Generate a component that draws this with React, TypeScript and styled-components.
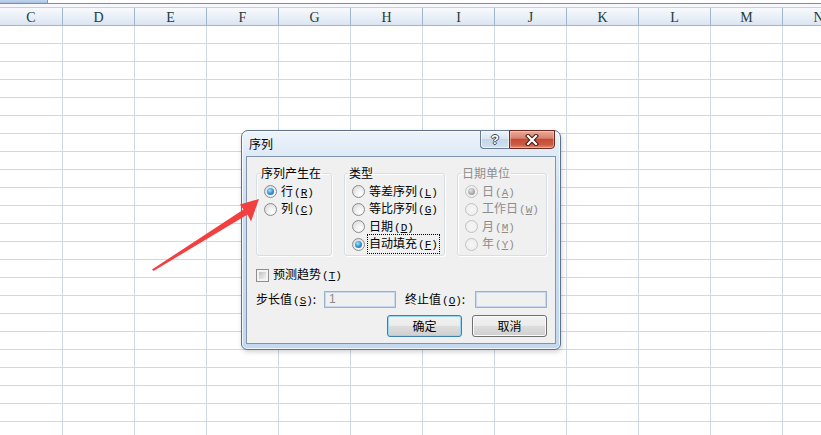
import React from 'react';
import styled, { createGlobalStyle } from 'styled-components';

const Global = createGlobalStyle`
  html, body { margin: 0; padding: 0; background: #ffffff; }
  body { overflow: hidden; }
`;

const Page = styled.div`
  position: relative;
  width: 821px;
  height: 435px;
  overflow: hidden;
  background: #ffffff;
  font-family: "Noto Sans CJK SC", "Liberation Sans", sans-serif;
`;

const TopStrip = styled.div`
  height: 3px;
  background: #ffffff;
  border-bottom: 1px solid #7290b4;
  display: flex;
`;

const SheetTab = styled.div`
  width: 48px;
  height: 3px;
  background: linear-gradient(180deg, #c3d6ee, #a8c2e4);
  border-right: 1px solid #7f9dc2;
  box-sizing: border-box;
`;

const HeaderBand = styled.div`
  padding-top: 3px;
  background: linear-gradient(180deg, #f7f9fc, #eef3f9);
`;

const HeaderRow = styled.div`
  display: flex;
  height: 19px;
  box-sizing: border-box;
  border-top: 1px solid #c3d0e0;
  border-bottom: 1px solid #9eb6ce;
  background: linear-gradient(180deg, #f7f9fd 0%, #e9eff7 55%, #dbe5f1 100%);
`;

const HeadCell = styled.div<{ $first?: boolean }>`
  flex: none;
  width: ${p => (p.$first ? 63 : 72)}px;
  box-sizing: border-box;
  border-right: 1px solid #9eb6ce;
  display: flex;
  justify-content: center;
  align-items: center;
  padding-top: 2px;
  font-family: "Liberation Serif", serif;
  font-size: 14px;
  color: #1f3b3a;
  line-height: 14px;
`;

const GridRow = styled.div`
  display: flex;
  height: 18px;
  box-sizing: border-box;
  border-bottom: 1px solid #d0d7e5;
`;

const GridCell = styled.div<{ $first?: boolean }>`
  flex: none;
  width: ${p => (p.$first ? 63 : 72)}px;
  box-sizing: border-box;
  border-right: 1px solid #d0d7e5;
`;

/* ---------- dialog ---------- */

const Dialog = styled.div`
  position: absolute;
  left: 241px;
  top: 130px;
  width: 320px;
  height: 220px;
  box-sizing: border-box;
  border: 1px solid #5d7189;
  border-radius: 7px 7px 6px 6px;
  background: linear-gradient(180deg, #edf4fb 0%, #dde9f6 12%, #cadcf1 40%, #c3d9f0 100%);
  box-shadow: inset 0 0 0 1px rgba(255, 255, 255, 0.75), 1px 2px 5px rgba(0, 0, 0, 0.18);
  padding: 0 4px 5px 4px;
  display: flex;
  flex-direction: column;
  color: #000;
  font-size: 12px;
  line-height: 14px;
`;

const TitleBar = styled.div`
  height: 25px;
  flex: none;
  display: flex;
  justify-content: space-between;
  align-items: flex-start;
`;

const TitleText = styled.div`
  padding: 6px 0 0 3px;
  font-size: 12px;
  line-height: 14px;
`;

const CaptionButtons = styled.div`
  display: flex;
  margin-top: -1px;
  margin-right: 1px;
`;

const HelpButton = styled.div`
  width: 29px;
  height: 19px;
  box-sizing: border-box;
  border: 1px solid #6a7c93;
  border-right: none;
  border-radius: 0 0 0 4px;
  background: linear-gradient(180deg, #eef4fb 0%, #dbe6f3 45%, #c5d6ea 50%, #d2e1f1 100%);
  box-shadow: inset 0 0 0 1px rgba(255, 255, 255, 0.6);
  display: flex;
  align-items: center;
  justify-content: center;
  font-family: "Liberation Sans", sans-serif;
  font-weight: bold;
  font-size: 13px;
  color: #ffffff;
  text-shadow: 1px 0 #34465d, -1px 0 #34465d, 0 1px #34465d, 0 -1px #34465d;
`;

const CloseButton = styled.div`
  width: 46px;
  height: 19px;
  box-sizing: border-box;
  border: 1px solid #6b2a21;
  border-radius: 0 0 4px 0;
  background: linear-gradient(180deg, #e9ab9a 0%, #d9826e 42%, #c54a35 50%, #cc5a43 80%, #e08d72 100%);
  box-shadow: inset 0 0 0 1px rgba(255, 220, 210, 0.45);
  display: flex;
  align-items: center;
  justify-content: center;
`;

const Client = styled.div`
  flex: 1;
  box-sizing: border-box;
  border: 1px solid #8195ad;
  background: #f0f0f0;
  padding: 9px 8px 0 9px;
  display: flex;
  flex-direction: column;
`;

const GroupsRow = styled.div`
  display: flex;
  gap: 12px;
  align-items: stretch;
`;

const Group = styled.fieldset<{ $w?: number }>`
  margin: 0;
  padding: 3px 0 2px 7px;
  min-width: 0;
  ${p => (p.$w ? `width: ${p.$w}px; flex: none;` : 'flex: 1;')}
  box-sizing: border-box;
  border: 1px solid #d5dfe5;
  border-radius: 3px;
  box-shadow: inset 1px 1px 0 #ffffff, 1px 1px 0 #ffffff;
`;

const Legend = styled.legend<{ $disabled?: boolean }>`
  padding: 0 1px;
  margin-left: -4px;
  font-size: 12px;
  line-height: 14px;
  color: ${p => (p.$disabled ? '#8d8d8d' : '#000')};
`;

const OptionRow = styled.div<{ $disabled?: boolean }>`
  height: 17.5px;
  display: flex;
  align-items: center;
  gap: 4px;
  white-space: nowrap;
  color: ${p => (p.$disabled ? '#8d8d8d' : '#000')};
`;

const RadioMark = styled.span<{ $checked?: boolean; $disabled?: boolean }>`
  position: relative;
  flex: none;
  width: 13px;
  height: 13px;
  box-sizing: border-box;
  border-radius: 50%;
  border: 1px solid ${p => (p.$disabled ? '#c2c2c2' : '#8b8c8c')};
  background: ${p =>
    p.$disabled
      ? 'radial-gradient(circle at 50% 50%, #f6f6f6 0%, #ececec 100%)'
      : 'radial-gradient(circle at 65% 70%, #ffffff 0%, #f2f2f2 35%, #d2d2d2 100%)'};
  &::after {
    content: '';
    display: ${p => (p.$checked ? 'block' : 'none')};
    position: absolute;
    left: 2px;
    top: 2px;
    width: 7px;
    height: 7px;
    border-radius: 50%;
    background: ${p =>
      p.$disabled
        ? 'radial-gradient(circle at 40% 35%, #e2e2e2 0%, #a9a9a9 60%, #8a8a8a 100%)'
        : 'radial-gradient(circle at 40% 35%, #a6e6ff 0%, #3f9bd9 45%, #0d5798 100%)'};
  }
`;

const Text = styled.span<{ $focus?: boolean }>`
  padding: 0 1px;
  margin-left: -1px;
  line-height: 15px;
  outline: ${p => (p.$focus ? '1px dotted #000' : 'none')};
  outline-offset: 0px;
`;

const Key = styled.span`
  font-family: "Liberation Mono", monospace;
  font-size: 11px;
  margin-left: 1px;
`;

const CheckRow = styled.div`
  margin-top: 12px;
  height: 14px;
  display: flex;
  align-items: center;
  gap: 4px;
`;

const CheckMark = styled.span`
  position: relative;
  flex: none;
  width: 13px;
  height: 13px;
  box-sizing: border-box;
  border: 1px solid #8e8f8f;
  background: #f4f4f4;
  &::after {
    content: '';
    position: absolute;
    left: 2px;
    top: 2px;
    width: 7px;
    height: 7px;
    background: linear-gradient(135deg, #bfc2c5 0%, #dcdcdc 55%, #f2f2f2 100%);
  }
`;

const FieldRow = styled.div`
  margin-top: 9px;
  height: 17px;
  display: flex;
  align-items: center;
`;

const FieldLabel = styled.span<{ $w: number; $gap?: number }>`
  flex: none;
  width: ${p => p.$w}px;
  margin-left: ${p => p.$gap || 0}px;
  white-space: nowrap;
  line-height: 15px;
`;

const Input = styled.div`
  flex: none;
  width: 72px;
  height: 17px;
  box-sizing: border-box;
  border: 1px solid #9bb2cb;
  box-shadow: inset 0 0 0 1px #c8d8ea;
  background: #f0f0f0;
  padding-left: 4px;
  font-family: "Liberation Sans", sans-serif;
  font-size: 12px;
  line-height: 15px;
  color: #8a8a8a;
`;

const ButtonRow = styled.div`
  margin-top: 7px;
  display: flex;
  justify-content: flex-end;
  gap: 10px;
`;

const Button = styled.div<{ $default?: boolean }>`
  width: 75px;
  height: 22px;
  box-sizing: border-box;
  border: 1px solid ${p => (p.$default ? '#3c7fb1' : '#707070')};
  border-radius: 3px;
  background: linear-gradient(180deg, #f2f2f2 0%, #ebebeb 48%, #dddddd 52%, #cfcfcf 100%);
  box-shadow: inset 0 0 0 1px ${p => (p.$default ? '#97d6f5' : '#fbfbfb')};
  display: flex;
  align-items: center;
  justify-content: center;
  font-size: 12px;
  line-height: 14px;
`;

const ArrowLayer = styled.svg`
  position: absolute;
  left: 0;
  top: 0;
  pointer-events: none;
`;

const columns = ['C', 'D', 'E', 'F', 'G', 'H', 'I', 'J', 'K', 'L', 'M', 'N'];
const rows = Array.from({ length: 23 }, (_, i) => i);

type Opt = { label: string; key: string; checked?: boolean; focus?: boolean };

const kindOptions: Opt[] = [
  { label: '等差序列', key: 'L' },
  { label: '等比序列', key: 'G' },
  { label: '日期', key: 'D' },
  { label: '自动填充', key: 'F', checked: true, focus: true },
];

const unitOptions: Opt[] = [
  { label: '日', key: 'A', checked: true },
  { label: '工作日', key: 'W' },
  { label: '月', key: 'M' },
  { label: '年', key: 'Y' },
];

const Radio: React.FC<{ opt: Opt; disabled?: boolean }> = ({ opt, disabled }) => (
  <OptionRow $disabled={disabled}>
    <RadioMark $checked={opt.checked} $disabled={disabled} />
    <Text $focus={opt.focus}>
      {opt.label}
      <Key>
        (<u>{opt.key}</u>)
      </Key>
    </Text>
  </OptionRow>
);

export default function App() {
  return (
    <Page>
      <Global />
      <TopStrip>
        <SheetTab />
      </TopStrip>
      <HeaderBand>
        <HeaderRow>
          {columns.map((c, i) => (
            <HeadCell key={c} $first={i === 0}>
              {c}
            </HeadCell>
          ))}
        </HeaderRow>
      </HeaderBand>
      {rows.map(r => (
        <GridRow key={r}>
          {columns.map((c, i) => (
            <GridCell key={c} $first={i === 0} />
          ))}
        </GridRow>
      ))}

      <Dialog>
        <TitleBar>
          <TitleText>序列</TitleText>
          <CaptionButtons>
            <HelpButton>?</HelpButton>
            <CloseButton>
              <svg width="16" height="12" viewBox="0 0 16 12">
                <path d="M4 2 L12 10 M12 2 L4 10" stroke="#3b1a15" strokeWidth="4.2" strokeLinecap="square" />
                <path d="M4 2 L12 10 M12 2 L4 10" stroke="#ffffff" strokeWidth="2.2" strokeLinecap="square" />
              </svg>
            </CloseButton>
          </CaptionButtons>
        </TitleBar>
        <Client>
          <GroupsRow>
            <Group $w={76}>
              <Legend>序列产生在</Legend>
              <Radio opt={{ label: '行', key: 'R', checked: true }} />
              <Radio opt={{ label: '列', key: 'C' }} />
            </Group>
            <Group $w={101}>
              <Legend>类型</Legend>
              {kindOptions.map(o => (
                <Radio key={o.key} opt={o} />
              ))}
            </Group>
            <Group>
              <Legend $disabled>日期单位</Legend>
              {unitOptions.map(o => (
                <Radio key={o.key} opt={o} disabled />
              ))}
            </Group>
          </GroupsRow>
          <CheckRow>
            <CheckMark />
            <Text>
              预测趋势
              <Key>
                (<u>T</u>)
              </Key>
            </Text>
          </CheckRow>
          <FieldRow>
            <FieldLabel $w={68}>
              步长值
              <Key>
                (<u>S</u>)
              </Key>
              :
            </FieldLabel>
            <Input>1</Input>
            <FieldLabel $w={70} $gap={9}>
              终止值
              <Key>
                (<u>O</u>)
              </Key>
              :
            </FieldLabel>
            <Input />
          </FieldRow>
          <ButtonRow>
            <Button $default>确定</Button>
            <Button>取消</Button>
          </ButtonRow>
        </Client>
      </Dialog>

      <ArrowLayer width="821" height="435" viewBox="0 0 821 435">
        <polygon
          points="152,269.5 243.5,209.5 240,204.5 259,199 251,221.5 247.5,214.5 153.5,271"
          fill="#f23f3f"
        />
      </ArrowLayer>
    </Page>
  );
}
